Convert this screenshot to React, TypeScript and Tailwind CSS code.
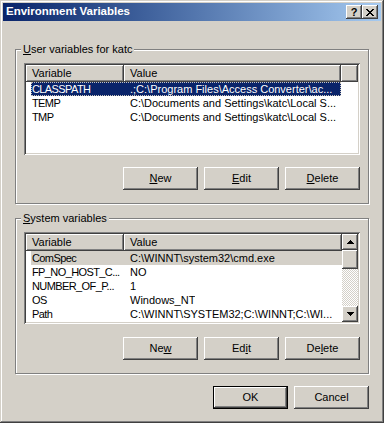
import type { ReactNode } from 'react'

// Win2k classic bevels
const raised =
  'shadow-[inset_-1px_-1px_0_#404040,inset_1px_1px_0_#ffffff,inset_-2px_-2px_0_#808080,inset_2px_2px_0_#d4d0c8]'
const sunken =
  'shadow-[inset_1px_1px_0_#808080,inset_-1px_-1px_0_#ffffff,inset_2px_2px_0_#404040,inset_-2px_-2px_0_#d4d0c8]'
const headerBevel = 'shadow-[inset_-1px_-1px_0_#404040,inset_1px_1px_0_#ffffff,inset_-2px_-2px_0_#808080]'

function Button({ children, isDefault }: { children: ReactNode; isDefault?: boolean }) {
  if (isDefault) {
    return (
      <div className="h-[23px] w-[75px] border border-black bg-[#d4d0c8]">
        <div className={`flex h-full w-full items-center justify-center ${raised}`}>{children}</div>
      </div>
    )
  }
  return (
    <div className={`flex h-[23px] w-[75px] items-center justify-center bg-[#d4d0c8] ${raised}`}>{children}</div>
  )
}

function Group({ label, children }: { label: ReactNode; children: ReactNode }) {
  return (
    <div className="relative border border-[#808080] px-[8px] pt-[13px] pb-[13px] shadow-[inset_1px_1px_0_#ffffff,1px_1px_0_#ffffff]">
      <span className="absolute top-[-8px] left-[5px] bg-[#d4d0c8] px-[2px] leading-[14px]">{label}</span>
      {children}
    </div>
  )
}

function HeaderCell({ children, className }: { children?: ReactNode; className: string }) {
  return (
    <div className={`flex h-full items-center pl-[6px] ${headerBevel} ${className}`}>{children}</div>
  )
}

type Row = { name: string; value: string; state?: 'focus' | 'dim' }

function Rows({ rows, width }: { rows: Row[]; width: string }) {
  return (
    <>
      {rows.map((r) => (
        <div key={r.name} className="flex h-[14px] pl-[5px]">
          <div
            className={`flex h-full ${width} items-center whitespace-nowrap ${
              r.state === 'focus'
                ? 'bg-[#0a246a] text-white outline-1 outline-dotted outline-[#c8c4bc] -outline-offset-1'
                : r.state === 'dim'
                  ? 'bg-[#d4d0c8]'
                  : ''
            }`}
          >
            <span className="w-[93px] shrink-0 overflow-hidden pl-[1px] tracking-[-0.6px]">{r.name}</span>
            <span className="overflow-hidden pl-[6px]">{r.value}</span>
          </div>
        </div>
      ))}
    </>
  )
}

function Arrow({ up }: { up?: boolean }) {
  return (
    <div className={`flex h-[16px] w-[16px] items-center justify-center bg-[#d4d0c8] ${raised}`}>
      <svg width="7" height="4" viewBox="0 0 7 4" className={up ? '' : 'rotate-180'}>
        <path d="M3 0h1v1h1v1h1v1h1v1H0V3h1V2h1V1h1z" fill="#000" />
      </svg>
    </div>
  )
}

const userRows: Row[] = [
  { name: 'CLASSPATH', value: '.;C:\\Program Files\\Access Converter\\ac...', state: 'focus' },
  { name: 'TEMP', value: 'C:\\Documents and Settings\\katc\\Local S...' },
  { name: 'TMP', value: 'C:\\Documents and Settings\\katc\\Local S...' },
]

const systemRows: Row[] = [
  { name: 'ComSpec', value: 'C:\\WINNT\\system32\\cmd.exe', state: 'dim' },
  { name: 'FP_NO_HOST_C...', value: 'NO' },
  { name: 'NUMBER_OF_P...', value: '1' },
  { name: 'OS', value: 'Windows_NT' },
  { name: 'Path', value: 'C:\\WINNT\\SYSTEM32;C:\\WINNT;C:\\WI...' },
]

export default function App() {
  return (
    <div className="flex h-[423px] w-[384px] flex-col bg-[#d4d0c8] p-[3px] font-['Liberation_Sans',Arial,sans-serif] text-[11px] text-black shadow-[inset_-1px_-1px_0_#404040,inset_1px_1px_0_#d4d0c8,inset_-2px_-2px_0_#808080,inset_2px_2px_0_#ffffff]">
      {/* title bar */}
      <div className="flex h-[18px] items-center bg-linear-to-r from-[#0a246a] to-[#a6caf0] pr-[3px] pl-[3px]">
        <span className="flex-1 text-[11.5px] font-bold text-white">Environment Variables</span>
        <div className={`flex h-[14px] w-[16px] items-center justify-center bg-[#d4d0c8] text-[11px] font-bold leading-none ${raised}`}>
          ?
        </div>
        <div className={`flex h-[14px] w-[16px] items-center justify-center bg-[#d4d0c8] ${raised}`}>
          <svg width="8" height="7" viewBox="0 0 8 7">
            <path d="M0 0h2v1h1v1h2V1h1V0h2v1H7v1H6v1H5v1h1v1h1v1h1v1H6V6H5V5H3v1H2v1H0V6h1V5h1V4h1V3H2V2H1V1H0z" fill="#000" />
          </svg>
        </div>
      </div>

      <div className="flex flex-col px-[12px] pt-[28px]">
        <Group
          label={
            <>
              <u>U</u>ser variables for katc
            </>
          }
        >
          <div className={`h-[92px] overflow-hidden bg-white p-[2px] ${sunken}`}>
            <div className="flex h-[17px] bg-[#d4d0c8]">
              <HeaderCell className="w-[98px]">Variable</HeaderCell>
              <HeaderCell className="w-[217px]">Value</HeaderCell>
              <HeaderCell className="flex-1" />
            </div>
            <Rows rows={userRows} width="w-[310px]" />
          </div>
          <div className="mt-[12px] flex justify-end gap-[6px]">
            <Button>
              <u>N</u>ew
            </Button>
            <Button>
              <u>E</u>dit
            </Button>
            <Button>
              <u>D</u>elete
            </Button>
          </div>
        </Group>

        <div className="mt-[14px]">
          <Group
            label={
              <>
                <u>S</u>ystem variables
              </>
            }
          >
            <div className={`flex h-[92px] bg-white p-[2px] ${sunken}`}>
              <div className="flex-1 overflow-hidden">
                <div className="flex h-[17px] bg-[#d4d0c8]">
                  <HeaderCell className="w-[98px]">Variable</HeaderCell>
                  <HeaderCell className="flex-1">Value</HeaderCell>
                </div>
                <Rows rows={systemRows} width="w-[311px]" />
              </div>
              <div className="flex w-[16px] flex-col">
                <Arrow up />
                <div className={`h-[19px] bg-[#d4d0c8] ${raised}`} />
                <div className="flex-1 bg-[repeating-conic-gradient(#d4d0c8_0_25%,#ffffff_0_50%)] bg-[length:2px_2px]" />
                <Arrow />
              </div>
            </div>
            <div className="mt-[13px] flex justify-end gap-[6px]">
              <Button>
                Ne<u>w</u>
              </Button>
              <Button>
                Ed<u>i</u>t
              </Button>
              <Button>
                De<u>l</u>ete
              </Button>
            </div>
          </Group>
        </div>

        <div className="mt-[12px] flex justify-end gap-[6px]">
          <Button isDefault>OK</Button>
          <Button>Cancel</Button>
        </div>
      </div>
    </div>
  )
}
